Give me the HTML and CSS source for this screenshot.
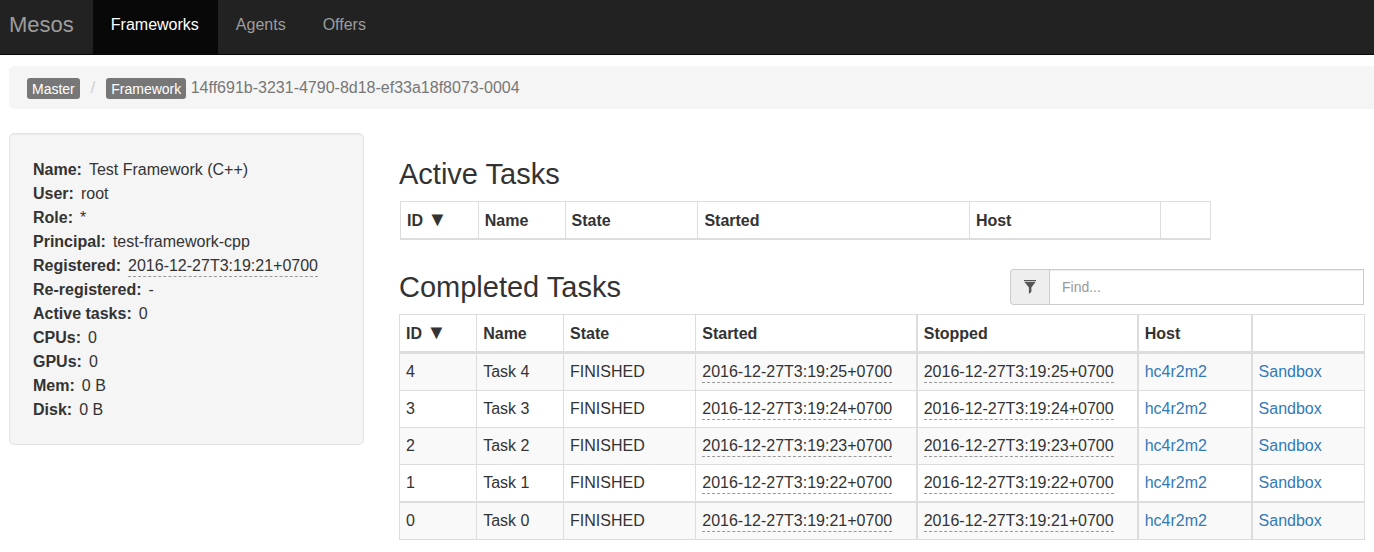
FILE: index.html
```html
<!DOCTYPE html>
<html lang="en">
<head>
<meta charset="utf-8">
<title>Mesos</title>
<link rel="stylesheet" href="styles.css">
</head>
<body>
<nav class="navbar">
  <a class="brand" href="#">Mesos</a>
  <ul class="nav">
    <li><a class="nav-link active" href="#">Frameworks</a></li>
    <li><a class="nav-link" href="#">Agents</a></li>
    <li><a class="nav-link" href="#">Offers</a></li>
  </ul>
</nav>
<div class="container">
  <ol class="breadcrumb">
    <li><a class="badge" href="#">Master</a></li>
    <li class="divider">/</li>
    <li class="current"><span class="badge">Framework</span> 14ff691b-3231-4790-8d18-ef33a18f8073-0004</li>
  </ol>
  <div class="columns">
    <aside class="well">
      <dl class="facts">
        <div><dt>Name:</dt><dd>Test Framework (C++)</dd></div>
        <div><dt>User:</dt><dd>root</dd></div>
        <div><dt>Role:</dt><dd>*</dd></div>
        <div><dt>Principal:</dt><dd>test-framework-cpp</dd></div>
        <div><dt>Registered:</dt><dd><time>2016-12-27T3:19:21+0700</time></dd></div>
        <div><dt>Re-registered:</dt><dd>-</dd></div>
        <div><dt>Active tasks:</dt><dd>0</dd></div>
        <div><dt>CPUs:</dt><dd>0</dd></div>
        <div><dt>GPUs:</dt><dd>0</dd></div>
        <div><dt>Mem:</dt><dd>0 B</dd></div>
        <div><dt>Disk:</dt><dd>0 B</dd></div>
      </dl>
    </aside>
    <main class="tasks">
      <h2>Active Tasks</h2>
      <table class="table active-table">
        <colgroup><col class="a-id"><col class="a-name"><col class="a-state"><col class="a-started"><col class="a-host"><col></colgroup>
        <thead><tr><th>ID <span class="sort">▼</span></th><th>Name</th><th>State</th><th>Started</th><th>Host</th><th></th></tr></thead>
      </table>
      <div class="heading-row">
        <h2>Completed Tasks</h2>
        <div class="search">
          <label class="search-icon" for="find" aria-label="Find tasks">
            <svg width="12" height="14" viewBox="0 0 12 14"><path d="M0 0h12v1.2H0zM.5 2h11L7.4 7.5v4.3L4.9 14V7.5z" fill="#555"/></svg>
          </label>
          <input id="find" type="text" placeholder="Find...">
        </div>
      </div>
      <table class="table completed-table">
        <colgroup><col class="c-id"><col class="c-name"><col class="c-state"><col class="c-time"><col class="c-time"><col class="c-host"><col></colgroup>
        <thead><tr><th>ID <span class="sort">▼</span></th><th>Name</th><th>State</th><th>Started</th><th>Stopped</th><th>Host</th><th></th></tr></thead>
        <tbody>
          <tr><td>4</td><td>Task 4</td><td>FINISHED</td><td><time>2016-12-27T3:19:25+0700</time></td><td><time>2016-12-27T3:19:25+0700</time></td><td><a href="#">hc4r2m2</a></td><td><a href="#">Sandbox</a></td></tr>
          <tr><td>3</td><td>Task 3</td><td>FINISHED</td><td><time>2016-12-27T3:19:24+0700</time></td><td><time>2016-12-27T3:19:24+0700</time></td><td><a href="#">hc4r2m2</a></td><td><a href="#">Sandbox</a></td></tr>
          <tr><td>2</td><td>Task 2</td><td>FINISHED</td><td><time>2016-12-27T3:19:23+0700</time></td><td><time>2016-12-27T3:19:23+0700</time></td><td><a href="#">hc4r2m2</a></td><td><a href="#">Sandbox</a></td></tr>
          <tr><td>1</td><td>Task 1</td><td>FINISHED</td><td><time>2016-12-27T3:19:22+0700</time></td><td><time>2016-12-27T3:19:22+0700</time></td><td><a href="#">hc4r2m2</a></td><td><a href="#">Sandbox</a></td></tr>
          <tr><td>0</td><td>Task 0</td><td>FINISHED</td><td><time>2016-12-27T3:19:21+0700</time></td><td><time>2016-12-27T3:19:21+0700</time></td><td><a href="#">hc4r2m2</a></td><td><a href="#">Sandbox</a></td></tr>
        </tbody>
      </table>
    </main>
  </div>
</div>
</body>
</html>
```
FILE: styles.css
```css
* { box-sizing: border-box; }
body {
  margin: 0;
  background: #fff;
  color: #333;
  font: 16px/24px "Liberation Sans", Arial, sans-serif;
}
a { color: #337ab7; text-decoration: none; }
h2 { margin: 0; font-size: 29px; line-height: 32px; font-weight: 400; }
time { display: inline-block; line-height: 20px; border-bottom: 1px dashed #999; }

.navbar {
  display: flex;
  padding-left: 9px;
  background: #222;
  border-bottom: 1px solid #080808;
}
.brand { padding: 13px 19px 17px 0; color: #9d9d9d; font-size: 22px; }
.nav { display: flex; margin: 0; padding: 0; list-style: none; }
.nav-link { display: block; padding: 13px 19px 17px 18px; color: #9d9d9d; }
.nav-link.active { background: #080808; color: #fff; }

.container { padding: 11px 0 12px 9px; }
.breadcrumb {
  display: flex;
  align-items: center;
  margin: 0 0 24px;
  padding: 9px 18px;
  background: #f5f5f5;
  border-radius: 5px 0 0 5px;
  color: #777;
  list-style: none;
  line-height: 25px;
}
.divider { padding: 0 11px; color: #ccc; }
.badge {
  display: inline-block;
  padding: 1px 5px 0;
  background: #777;
  border-radius: 3px;
  color: #fff;
  font-size: 14px;
  line-height: 20px;
  vertical-align: -1px;
}

.columns {
  display: grid;
  grid-template-columns: 355fr 966fr;
  column-gap: 35px;
  align-items: start;
  padding-right: 9px;
}
.well {
  padding: 24px 23px 22px;
  background: #f5f5f5;
  border: 1px solid #e3e3e3;
  border-radius: 5px;
  box-shadow: inset 0 1px 1px rgba(0, 0, 0, .05);
}
.facts { margin: 0; }
.facts div { display: flex; gap: 7px; }
.facts dt { font-weight: 700; }
.facts dd { margin: 0; }

.tasks { padding-top: 25px; min-width: 0; }
.heading-row {
  display: flex;
  justify-content: space-between;
  align-items: center;
  margin-top: 29px;
}
.search { display: flex; width: 354px; height: 36px; margin-right: 1px; }
.search-icon {
  display: flex;
  align-items: center;
  justify-content: center;
  width: 39px;
  background: #eee;
  border: 1px solid #ccc;
  border-right: 0;
  border-radius: 4px 0 0 4px;
}
.search input {
  flex: 1;
  min-width: 0;
  padding: 0 12px;
  border: 1px solid #ccc;
  border-radius: 0;
  box-shadow: inset 0 1px 1px rgba(0, 0, 0, .075);
  font: 14px/20px "Liberation Sans", Arial, sans-serif;
}
.search input::placeholder { color: #999; }

.table { width: 100%; table-layout: fixed; border-collapse: collapse; }
.table th, .table td { padding: 6px; border: 1px solid #ddd; text-align: left; white-space: nowrap; }
.table thead th { padding: 7px 6px 5px; border-bottom-width: 2px; }
.sort { font-size: 20px; line-height: 20px; }
.active-table { width: 84%; margin: 11px 0 0 1px; }
.a-id { width: 9.6%; }
.a-name { width: 10.7%; }
.a-state { width: 16.4%; }
.a-started { width: 33.5%; }
.a-host { width: 23.6%; }

.completed-table { margin-top: 9px; }
.completed-table thead th { border-bottom-width: 3px; }
.completed-table tbody tr:nth-child(odd) { background: #f9f9f9; }
.completed-table tbody tr:last-child td { border-top-width: 2px; }
.completed-table th:nth-child(n+5), .completed-table td:nth-child(n+5) { border-left-width: 2px; }
.c-id { width: 8%; }
.c-name { width: 9%; }
.c-state { width: 13.7%; }
.c-time { width: 22.9%; }
.c-host { width: 11.8%; }
```
